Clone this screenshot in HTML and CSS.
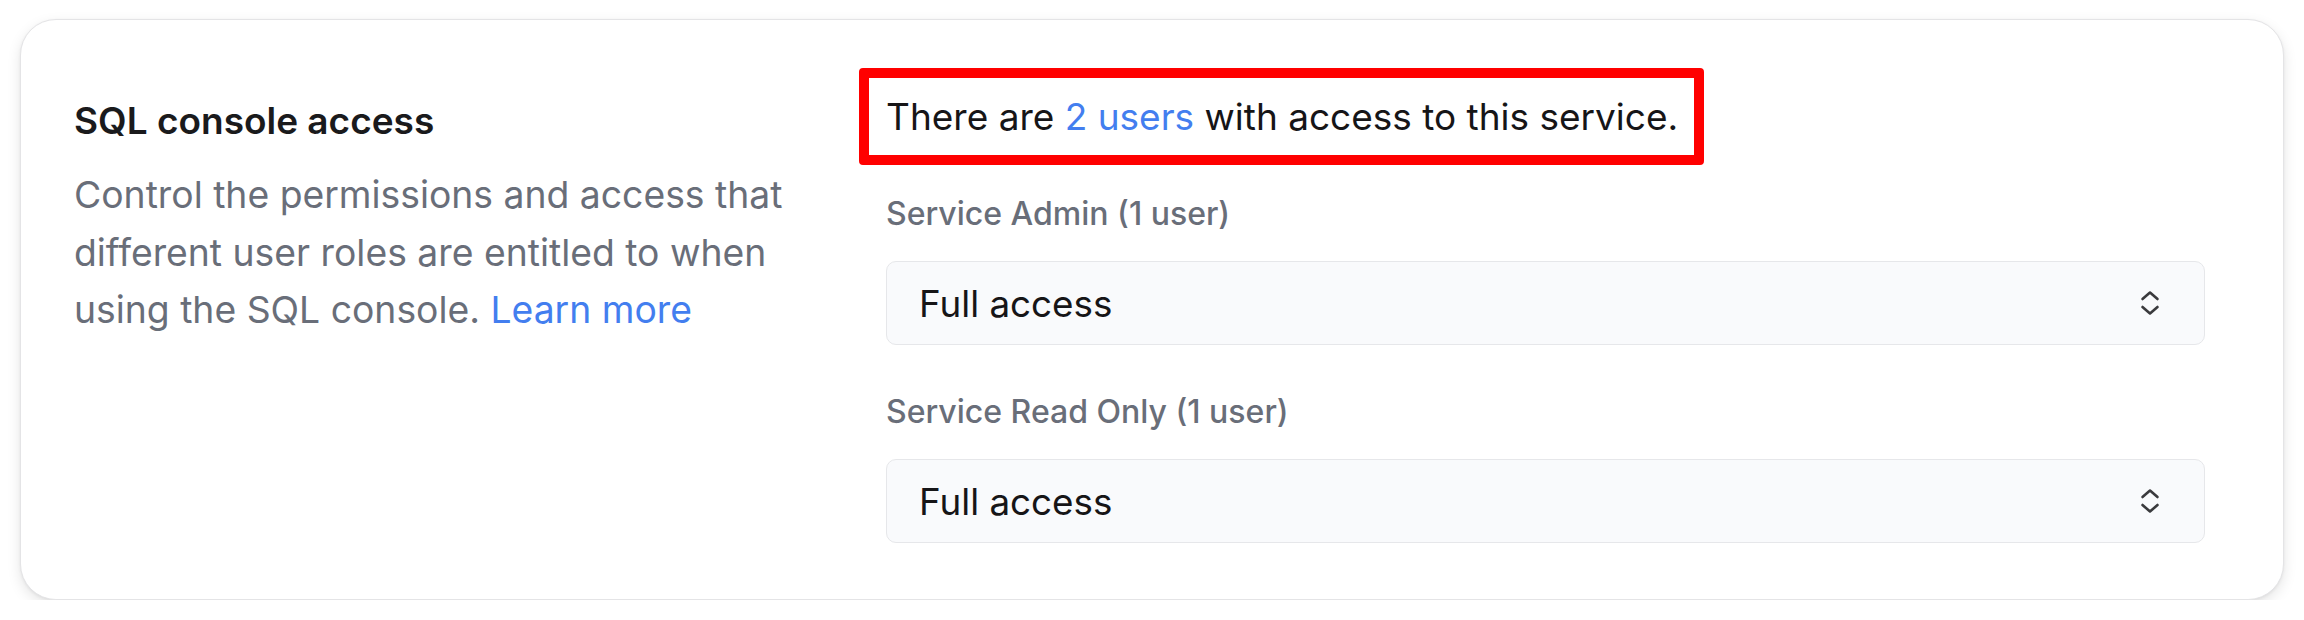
FILE: index.html
```html
<!DOCTYPE html>
<html lang="en">
<head>
<meta charset="utf-8">
<title>SQL console access</title>
<link rel="stylesheet" href="styles.css">
</head>
<body>
<section class="card">
  <div class="info">
    <h2 class="title">SQL console access</h2>
    <p class="desc">Control the permissions and access that different user roles are entitled to when using the SQL console. <a class="link" href="#">Learn more</a></p>
  </div>
  <div class="settings">
    <p class="summary">There are <a class="link" href="#">2 users</a> with access to this service.</p>
    <div class="field">
      <div class="label">Service Admin (1 user)</div>
      <div class="select">
        <span class="value">Full access</span>
        <svg class="chevrons" width="20" height="28" viewBox="0 0 20 28" fill="none" stroke="#3a3a3d" stroke-width="2.6" stroke-linecap="round" stroke-linejoin="round"><path d="M2.5 10 L10 3.5 L17.5 10"/><path d="M2.5 18 L10 24.5 L17.5 18"/></svg>
      </div>
    </div>
    <div class="field">
      <div class="label">Service Read Only (1 user)</div>
      <div class="select">
        <span class="value">Full access</span>
        <svg class="chevrons" width="20" height="28" viewBox="0 0 20 28" fill="none" stroke="#3a3a3d" stroke-width="2.6" stroke-linecap="round" stroke-linejoin="round"><path d="M2.5 10 L10 3.5 L17.5 10"/><path d="M2.5 18 L10 24.5 L17.5 18"/></svg>
      </div>
    </div>
  </div>
</section>
</body>
</html>
```

FILE: styles.css
```css
* { box-sizing: border-box; }

html, body {
  margin: 0;
  padding: 0;
  background: #ffffff;
  font-family: Inter, "Noto Sans", "Liberation Sans", sans-serif;
}

.card {
  margin: 19px 20px 0 20px;
  height: 581px;
  border: 1px solid #e4e4e6;
  border-radius: 36px;
  background: #ffffff;
  box-shadow: 0 5px 14px rgba(0, 0, 0, 0.10), 0 1px 3px rgba(0, 0, 0, 0.06);
  padding: 48px 78px 0 53px;
  display: grid;
  grid-template-columns: 730px 1fr;
  column-gap: 82px;
  align-items: start;
}

.title {
  margin: 31px 0 0 0;
  font-size: 37px;
  line-height: 44px;
  font-weight: 600;
  color: #1a1a1c;
}

.desc {
  margin: 23px 0 0 0;
  font-size: 37.3px;
  line-height: 57.5px;
  font-weight: 400;
  color: #696e79;
}

.link {
  color: #437eef;
  text-decoration: none;
}

.settings {
  display: flex;
  flex-direction: column;
}

.summary {
  margin: 0 0 0 -27px;
  align-self: flex-start;
  border: 10px solid #ff0000;
  border-radius: 4px;
  padding: 13px 16px 13px 17px;
  font-size: 37px;
  line-height: 51px;
  color: #161517;
}

.field {
  display: flex;
  flex-direction: column;
  gap: 27px;
}

.field + .field {
  margin-top: 47px;
}

.summary + .field {
  margin-top: 29px;
}

.label {
  font-size: 32px;
  line-height: 40px;
  font-weight: 500;
  color: #696e79;
}

.select {
  height: 84px;
  border: 1px solid #e6e7ea;
  border-radius: 10px;
  background: #f9fafc;
  padding: 0 44px 0 32px;
  display: flex;
  align-items: center;
  justify-content: space-between;
}

.value {
  font-size: 36.8px;
  color: #161517;
}

.chevrons {
  display: block;
}
```
